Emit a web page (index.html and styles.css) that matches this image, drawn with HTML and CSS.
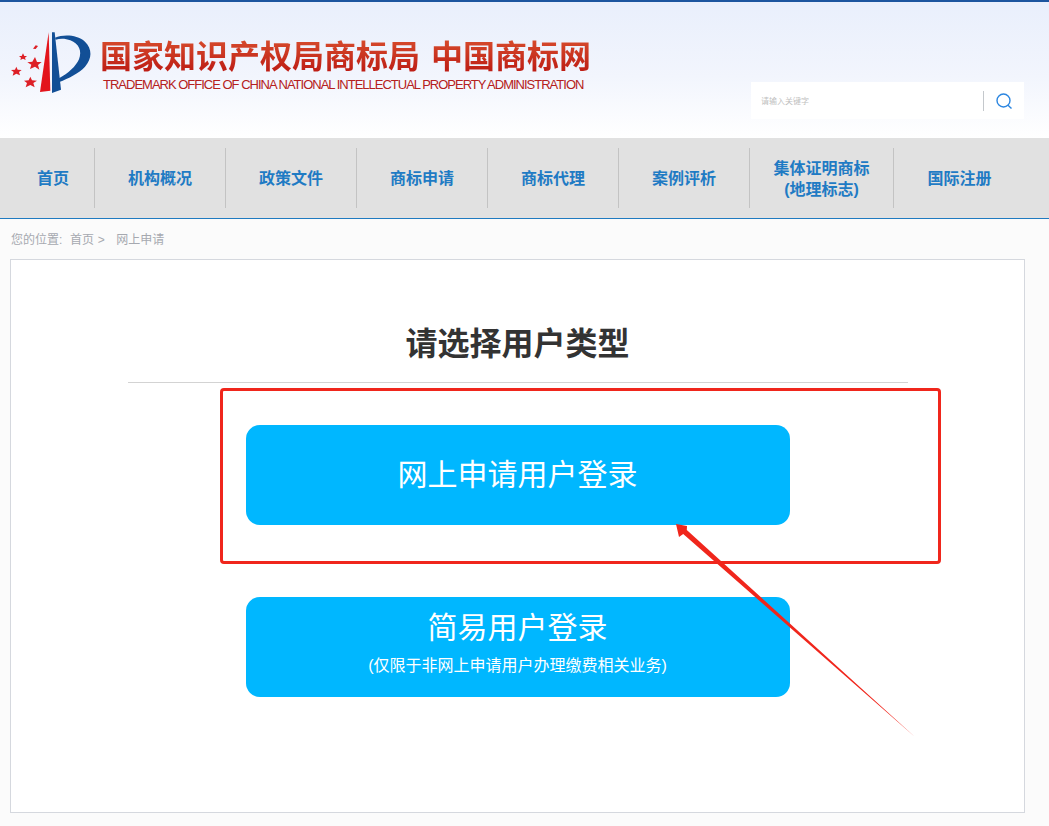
FILE: index.html
```html
<!DOCTYPE html>
<html lang="zh-CN">
<head>
<meta charset="utf-8">
<title>请选择用户类型</title>
<link rel="stylesheet" href="styles.css">
</head>
<body>
<header class="header">
  <div class="brand">
    <svg class="emblem" width="95" height="75" viewBox="0 0 285 225">
      <polygon points="131,22 136,197 105,201" fill="#e3141c"/>
      <polygon points="141,22 149,22 168,194 141,204" fill="#124f96"/>
      <path d="M150,38 C175,28 215,28 240,50 C262,72 262,100 240,125 C222,145 190,160 163,171 L162,160 C190,145 212,125 222,103 C232,78 222,56 196,46 C182,40 165,40 152,44 Z" fill="#124f96"/>
      <polygon points="90,96 96,111 110,111 99,120 103,134 90,125 75,132 79,119 67,112 82,110" fill="#dd1f26"/>
      <polygon points="54,85 58,93 66,93 60,98 62,105 54,101 46,105 48,98 42,93 50,93" fill="#dd1f26"/>
      <polygon points="34,125 38,134 50,135 42,141 45,151 34,146 23,152 26,141 18,135 30,134" fill="#dd1f26"/>
      <polygon points="76,155 81,166 96,167 85,174 89,187 76,180 62,187 66,174 57,167 71,166" fill="#dd1f26"/>
      <polygon points="92,61 99,63 92,72 84,71" fill="#dd1f26"/>
    </svg>
    <div class="brand-text">
      <div class="brand-cn">国家知识产权局商标局<span class="brand-gap">中国商标网</span></div>
      <div class="brand-en">TRADEMARK OFFICE OF CHINA NATIONAL INTELLECTUAL PROPERTY ADMINISTRATION</div>
    </div>
  </div>
  <div class="search">
    <span class="search-hint">请输入关键字</span>
    <span class="search-btn">
      <svg width="18" height="18" viewBox="0 0 18 18" fill="none" stroke="#2c86e0" stroke-width="1.400">
        <circle cx="8.500" cy="8.500" r="6.500"/>
        <path d="M13,13.200 L16.500,16.500"/>
      </svg>
    </span>
  </div>
</header>

<nav class="nav">
  <a class="nav-item nav-first">首页</a>
  <a class="nav-item">机构概况</a>
  <a class="nav-item">政策文件</a>
  <a class="nav-item">商标申请</a>
  <a class="nav-item">商标代理</a>
  <a class="nav-item">案例评析</a>
  <a class="nav-item nav-wide">集体证明商标<br>(地理标志)</a>
  <a class="nav-item nav-last">国际注册</a>
</nav>

<div class="crumbs">您的位置:&nbsp;&nbsp;首页 &gt;&nbsp;&nbsp; 网上申请</div>

<main class="panel">
  <h1 class="panel-title">请选择用户类型</h1>
  <div class="choices">
    <a class="choice">网上申请用户登录</a>
    <a class="choice choice-two">简易用户登录<small class="choice-note">(仅限于非网上申请用户办理缴费相关业务)</small></a>
  </div>
</main>

<div class="mark-box"></div>
<svg class="mark-arrow" width="260" height="230" viewBox="0 0 260 230">
  <polygon points="16,3 27,5 26.800,9 255,216 23.200,13 19,16" fill="#f0261c"/>
</svg>
</body>
</html>
```

FILE: styles.css
```css
* { box-sizing: border-box; }

html, body { margin: 0; padding: 0; }

body {
  position: relative;
  height: 826px;
  overflow: hidden;
  background: #fbfbfb;
  font-family: "Liberation Sans", "Noto Sans CJK SC", sans-serif;
}

.header {
  height: 138px;
  border-top: 2px solid #1c559f;
  background: linear-gradient(#e9effc 0%, #f2f5fd 55%, #ffffff 100%);
  display: flex;
  justify-content: space-between;
  padding: 23px 25px 0 5px;
}

.brand { display: flex; align-items: flex-start; }
.emblem { flex: none; }

.brand-cn {
  font-family: "Noto Sans CJK SC", sans-serif;
  font-size: 32px;
  font-weight: 700;
  line-height: 36px;
  margin-top: 11px;
  white-space: nowrap;
  color: #c8261a;
  background: linear-gradient(#d9502f, #bd1c14);
  -webkit-background-clip: text;
  background-clip: text;
  -webkit-text-fill-color: transparent;
}

.brand-gap { margin-left: 11px; }

.brand-en {
  font-size: 13px;
  line-height: 16px;
  margin: 5px 0 0 3px;
  letter-spacing: -1px;
  white-space: nowrap;
  color: #b52020;
}

.search {
  width: 273px;
  height: 37px;
  margin-top: 57px;
  background: #fff;
  display: flex;
  align-items: center;
  justify-content: space-between;
  padding-left: 10px;
}

.search-hint { font-size: 8px; color: #c0c0c0; }

.search-btn {
  width: 41px;
  height: 20px;
  border-left: 1px solid #c4c8cc;
  display: flex;
  align-items: center;
  justify-content: center;
}

.nav {
  height: 81px;
  background: #e1e1e1;
  border-bottom: 1px solid #1f7ac0;
  display: flex;
  align-items: center;
  padding-left: 12px;
}

.nav-item {
  width: 131px;
  height: 60px;
  margin-bottom: 1px;
  padding-top: 2px;
  border-right: 1px solid #c3c3c3;
  display: flex;
  align-items: center;
  justify-content: center;
  text-align: center;
  font-size: 16px;
  line-height: 21px;
  font-weight: 700;
  color: #1f7bc4;
}

.nav-first { width: 83px; }
.nav-wide { width: 144px; }
.nav-last { border-right: 0; }

.crumbs {
  height: 40px;
  padding: 13px 0 0 11px;
  font-size: 12px;
  line-height: 16px;
  word-spacing: 0.500px;
  color: #a6a9b0;
}

.panel {
  width: 1015px;
  height: 554px;
  margin-left: 10px;
  background: #fff;
  border: 1px solid #d5d8de;
  display: flex;
  flex-direction: column;
  align-items: center;
}

.panel-title {
  width: 780px;
  height: 123px;
  margin: 0;
  padding-top: 58px;
  border-bottom: 1px solid #d3d3d3;
  text-align: center;
  font-family: "Noto Sans CJK SC", sans-serif;
  font-size: 32px;
  line-height: 46px;
  font-weight: 700;
  color: #333;
}

.choices {
  display: flex;
  flex-direction: column;
  gap: 72px;
  margin-top: 42px;
}

.choice {
  width: 544px;
  height: 100px;
  border-radius: 14px;
  background: #00b7ff;
  color: #fff;
  font-size: 30px;
  line-height: 44px;
  display: flex;
  flex-direction: column;
  align-items: center;
  justify-content: center;
}

.choice-two { padding-bottom: 10px; }

.choice-note {
  font-size: 16px;
  line-height: 24px;
  margin-top: 4px;
}

.mark-box {
  position: absolute;
  left: 220px;
  top: 388px;
  width: 721px;
  height: 176px;
  border: 3px solid #f0261c;
  border-radius: 4px;
}

.mark-arrow {
  position: absolute;
  left: 660px;
  top: 521px;
}
```
